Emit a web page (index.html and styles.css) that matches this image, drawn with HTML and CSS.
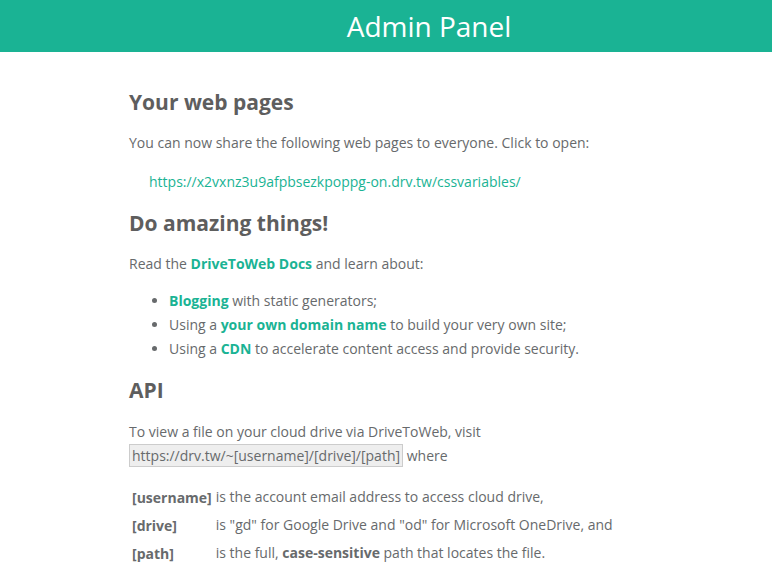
FILE: index.html
```html
<!DOCTYPE html>
<html lang="en">
<head>
    <meta charset="UTF-8">
    <meta name="viewport" content="width=device-width, initial-scale=1.0">
    <title>Admin Panel</title>
    <link rel="stylesheet" href="styles.css">
</head>
<body>
    <header class="top-bar">
        <h1>Admin Panel</h1>
    </header>
    <main class="content">
        <h2>Your web pages</h2>
        <p>You can now share the following web pages to everyone. Click to open:</p>
        <ul class="site-list">
            <li><a href="#">https://x2vxnz3u9afpbsezkpoppg-on.drv.tw/cssvariables/</a></li>
        </ul>

        <h2>Do amazing things!</h2>
        <p>Read the <a class="strong-link" href="#">DriveToWeb Docs</a> and learn about:</p>
        <ul class="features">
            <li><a class="strong-link" href="#">Blogging</a> with static generators;</li>
            <li>Using a <a class="strong-link" href="#">your own domain name</a> to build your very own site;</li>
            <li>Using a <a class="strong-link" href="#">CDN</a> to accelerate content access and provide security.</li>
        </ul>

        <h2>API</h2>
        <p class="api-intro">To view a file on your cloud drive via DriveToWeb, visit<br>
            <code>https://drv.tw/~[username]/[drive]/[path]</code> where</p>
        <table class="params">
            <tr>
                <th>[username]</th>
                <td>is the account email address to access cloud drive,</td>
            </tr>
            <tr>
                <th>[drive]</th>
                <td>is "gd" for Google Drive and "od" for Microsoft OneDrive, and</td>
            </tr>
            <tr>
                <th>[path]</th>
                <td>is the full, <b>case-sensitive</b> path that locates the file.</td>
            </tr>
        </table>
    </main>
</body>
</html>
```

FILE: styles.css
```css
body {
    margin: 0;
    font-family: "Open Sans", Arial, sans-serif;
    font-size: 14px;
    color: #676a6c;
    background: #fff;
}
.top-bar {
    background-color: #1ab394;
    height: 52px;
    display: flex;
    align-items: center;
    justify-content: center;
    padding-left: 86px;
}
.top-bar h1 {
    margin: 0;
    color: #fff;
    font-size: 28px;
    font-weight: 400;
    line-height: 1;
}
.content {
    max-width: 514px;
    margin: 0 auto;
    padding: 24px 0 0 0;
}
h2 {
    font-size: 21px;
    font-weight: 700;
    color: #5e5e5e;
    margin: 12px 0 16px;
    line-height: 28px;
}
p {
    margin: 0 0 18px;
    line-height: 21px;
}
a {
    color: #1ab394;
    text-decoration: none;
}
.strong-link {
    font-weight: 700;
}
.site-list {
    list-style: none;
    padding-left: 20px;
    margin: 0 0 17px;
}
.site-list li {
    line-height: 21px;
}
.features {
    padding-left: 40px;
    margin: -3px 0 15px;
}
.features li {
    line-height: 24px;
}
.api-intro {
    margin-bottom: 14px;
    line-height: 24px;
}
code {
    font-family: "Open Sans", Arial, sans-serif;
    font-size: 14px;
    background: #eee;
    border: 1px solid #ccc;
    padding: 1px 2px;
}
.params {
    border-spacing: 2px;
}
.params th {
    text-align: left;
    font-weight: 700;
    padding: 1px;
    vertical-align: middle;
}
.params td {
    padding: 1px;
    line-height: 20px;
    height: 24px;
}
```
